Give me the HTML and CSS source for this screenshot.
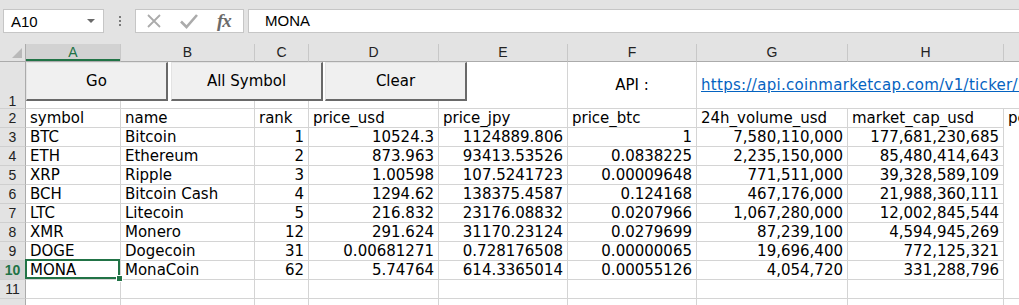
FILE: index.html
```html
<!DOCTYPE html>
<html>
<head>
    <link rel="stylesheet" href="styles.css">
</head>
<body>
<div class="app">
    <!-- formula bar -->
    <div class="formula-bar">
        <div class="name-box">
            <span>A10</span>
            <span class="caret"></span>
        </div>
        <div class="grip"><i></i><i></i><i></i></div>
        <div class="fx-box">
            <svg class="ico" width="18" height="18" viewBox="0 0 18 18">
                <path d="M3 3 L15 15 M15 3 L3 15" stroke="#ababab" stroke-width="1.8" fill="none"/>
            </svg>
            <svg class="ico" width="20" height="18" viewBox="0 0 20 18">
                <path d="M2 9.5 L7.5 15 L18 3" stroke="#ababab" stroke-width="2.6" fill="none"/>
            </svg>
            <span class="fx">fx</span>
        </div>
        <div class="formula-input">MONA</div>
    </div>

    <!-- sheet -->
    <div class="sheet">
        <div class="row head">
            <div class="corner"><span class="tri"></span></div>
            <div class="ch active">A</div>
            <div class="ch">B</div>
            <div class="ch">C</div>
            <div class="ch">D</div>
            <div class="ch">E</div>
            <div class="ch">F</div>
            <div class="ch">G</div>
            <div class="ch">H</div>
            <div class="ch"></div>
        </div>

        <div class="row tall">
            <div class="rh bottom">1</div>
            <div class="c"></div>
            <div class="c"></div>
            <div class="c"></div>
            <div class="c"></div>
            <div class="c"></div>
            <div class="c mid center">API :</div>
            <div class="c mid link-cell"><a href="#">https://api.coinmarketcap.com/v1/ticker/?convert=JPY</a></div>
        </div>

        <div class="row">
            <div class="rh">2</div>
            <div class="c">symbol</div>
            <div class="c">name</div>
            <div class="c">rank</div>
            <div class="c">price_usd</div>
            <div class="c">price_jpy</div>
            <div class="c">price_btc</div>
            <div class="c">24h_volume_usd</div>
            <div class="c">market_cap_usd</div>
            <div class="c open">percent_change_24h</div>
        </div>
        <div class="row">
            <div class="rh">3</div>
            <div class="c">BTC</div>
            <div class="c">Bitcoin</div>
            <div class="c num">1</div>
            <div class="c num">10524.3</div>
            <div class="c num">1124889.806</div>
            <div class="c num">1</div>
            <div class="c num">7,580,110,000</div>
            <div class="c num">177,681,230,685</div>
            <div class="c open"></div>
        </div>
        <div class="row">
            <div class="rh">4</div>
            <div class="c">ETH</div>
            <div class="c">Ethereum</div>
            <div class="c num">2</div>
            <div class="c num">873.963</div>
            <div class="c num">93413.53526</div>
            <div class="c num">0.0838225</div>
            <div class="c num">2,235,150,000</div>
            <div class="c num">85,480,414,643</div>
            <div class="c open"></div>
        </div>
        <div class="row">
            <div class="rh">5</div>
            <div class="c">XRP</div>
            <div class="c">Ripple</div>
            <div class="c num">3</div>
            <div class="c num">1.00598</div>
            <div class="c num">107.5241723</div>
            <div class="c num">0.00009648</div>
            <div class="c num">771,511,000</div>
            <div class="c num">39,328,589,109</div>
            <div class="c open"></div>
        </div>
        <div class="row">
            <div class="rh">6</div>
            <div class="c">BCH</div>
            <div class="c">Bitcoin Cash</div>
            <div class="c num">4</div>
            <div class="c num">1294.62</div>
            <div class="c num">138375.4587</div>
            <div class="c num">0.124168</div>
            <div class="c num">467,176,000</div>
            <div class="c num">21,988,360,111</div>
            <div class="c open"></div>
        </div>
        <div class="row">
            <div class="rh">7</div>
            <div class="c">LTC</div>
            <div class="c">Litecoin</div>
            <div class="c num">5</div>
            <div class="c num">216.832</div>
            <div class="c num">23176.08832</div>
            <div class="c num">0.0207966</div>
            <div class="c num">1,067,280,000</div>
            <div class="c num">12,002,845,544</div>
            <div class="c open"></div>
        </div>
        <div class="row">
            <div class="rh">8</div>
            <div class="c">XMR</div>
            <div class="c">Monero</div>
            <div class="c num">12</div>
            <div class="c num">291.624</div>
            <div class="c num">31170.23124</div>
            <div class="c num">0.0279699</div>
            <div class="c num">87,239,100</div>
            <div class="c num">4,594,945,269</div>
            <div class="c open"></div>
        </div>
        <div class="row">
            <div class="rh">9</div>
            <div class="c">DOGE</div>
            <div class="c">Dogecoin</div>
            <div class="c num">31</div>
            <div class="c num">0.00681271</div>
            <div class="c num">0.728176508</div>
            <div class="c num">0.00000065</div>
            <div class="c num">19,696,400</div>
            <div class="c num">772,125,321</div>
            <div class="c open"></div>
        </div>
        <div class="row">
            <div class="rh active">10</div>
            <div class="c selected">MONA<span class="handle"></span></div>
            <div class="c">MonaCoin</div>
            <div class="c num">62</div>
            <div class="c num">5.74764</div>
            <div class="c num">614.3365014</div>
            <div class="c num">0.00055126</div>
            <div class="c num">4,054,720</div>
            <div class="c num">331,288,796</div>
            <div class="c open"></div>
        </div>
        <div class="row">
            <div class="rh">11</div>
            <div class="c"></div><div class="c"></div><div class="c"></div>
            <div class="c"></div><div class="c"></div><div class="c"></div>
            <div class="c"></div><div class="c"></div><div class="c"></div>
        </div>
        <div class="row">
            <div class="rh"></div>
            <div class="c"></div><div class="c"></div><div class="c"></div>
            <div class="c"></div><div class="c"></div><div class="c"></div>
            <div class="c"></div><div class="c"></div><div class="c"></div>
        </div>

        <!-- form buttons floating over row 1 -->
        <div class="buttons">
            <button type="button" class="btn go">Go</button>
            <button type="button" class="btn all">All Symbol</button>
            <button type="button" class="btn clear">Clear</button>
        </div>
    </div>
</div>
</body>
</html>
```

FILE: styles.css
```css
/* Excel-like sheet */
body {
    margin: 0;
    overflow: hidden;
    background: #fff;
    font-family: "DejaVu Sans", sans-serif;
}

.app {
    width: 1019px;
    height: 305px;
    overflow: hidden;
}

/* ---- formula bar ---- */
.formula-bar {
    height: 44px;
    box-sizing: border-box;
    padding: 9px 0 0 3px;
    background: #e3e3e3;
    display: flex;
    align-items: flex-start;
    font-family: "Liberation Sans", Arial, sans-serif;
    font-size: 15px;
}

.name-box {
    width: 101px;
    height: 24px;
    box-sizing: border-box;
    border: 1px solid #c6c6c6;
    background: #fff;
    display: flex;
    align-items: center;
    justify-content: space-between;
    padding: 0 8px 0 7px;
}

.caret {
    width: 0;
    height: 0;
    border-left: 4px solid transparent;
    border-right: 4px solid transparent;
    border-top: 4px solid #6a6a6a;
}

.grip {
    width: 31px;
    height: 24px;
    display: flex;
    flex-direction: column;
    align-items: center;
    justify-content: center;
    gap: 2px;
}

.grip i {
    width: 2px;
    height: 2px;
    background: #7a7a7a;
}

.fx-box {
    width: 109px;
    height: 24px;
    box-sizing: border-box;
    border: 1px solid #c6c6c6;
    background: #fff;
    display: flex;
    align-items: center;
    padding-left: 9px;
}

.ico {
    display: block;
}

.ico + .ico {
    margin-left: 16px;
}

.fx {
    margin-left: 18px;
    font-family: "Liberation Serif", serif;
    font-style: italic;
    font-size: 19px;
    font-weight: bold;
    color: #6b6b6b;
    letter-spacing: -1px;
}

.formula-input {
    flex: 1;
    margin-left: 4px;
    height: 24px;
    box-sizing: border-box;
    border: 1px solid #c6c6c6;
    border-right: none;
    background: #fff;
    line-height: 22px;
    padding-left: 16px;
}

/* ---- sheet grid ---- */
.sheet {
    position: relative;
    width: 1084px;
    background: #fff;
}

.row {
    display: grid;
    grid-template-columns: 26px 95px 134px 54px 130px 129px 129px 151px 156px 80px;
    height: 19px;
}

.row.head {
    height: 18px;
    background: #e3e3e3;
}

.row.tall {
    height: 47px;
}

.corner {
    border-right: 1px solid #ababab;
    border-bottom: 1px solid #ababab;
    position: relative;
}

.tri {
    position: absolute;
    right: 3px;
    bottom: 3px;
    width: 0;
    height: 0;
    border-left: 10px solid transparent;
    border-bottom: 10px solid #b9b9b9;
}

.ch {
    border-right: 1px solid #c8c8c8;
    border-bottom: 1px solid #ababab;
    text-align: center;
    font-family: "Liberation Sans", Arial, sans-serif;
    font-size: 14px;
    line-height: 17px;
    color: #222;
}

.ch.active {
    background: #d2d2d2;
    color: #217346;
    box-shadow: inset 0 -2px 0 #217346;
}

.rh {
    background: #e3e3e3;
    border-right: 1px solid #ababab;
    border-bottom: 1px solid #cfcfcf;
    text-align: center;
    font-family: "Liberation Sans", Arial, sans-serif;
    font-size: 14px;
    line-height: 18px;
    color: #222;
}

.rh.bottom {
    display: flex;
    align-items: flex-end;
    justify-content: center;
    line-height: 14px;
}

.rh.active {
    background: #d2d2d2;
    color: #217346;
    font-weight: bold;
}

.c {
    border-right: 1px solid #d4d4d4;
    border-bottom: 1px solid #d4d4d4;
    padding: 0 4px;
    font-size: 15px;
    line-height: 18px;
    color: #000;
    white-space: nowrap;
    overflow: hidden;
}

.c.num {
    text-align: right;
}

.c.mid {
    line-height: 46px;
}

.c.center {
    text-align: center;
}

.c.open {
    border-right: none;
    border-bottom: none;
}

.link-cell {
    grid-column: span 3;
    border-right: none;
}

.link-cell a {
    color: #0563c1;
    text-decoration: underline;
    letter-spacing: 0.3px;
}

.c.selected {
    position: relative;
    overflow: visible;
}

.c.selected::after {
    content: "";
    position: absolute;
    left: -1px;
    top: -2px;
    right: 0;
    bottom: 0;
    border: 2px solid #217346;
}

.handle {
    position: absolute;
    right: -3px;
    bottom: -3px;
    width: 5px;
    height: 5px;
    background: #217346;
    border: 1px solid #fff;
    z-index: 2;
}

/* ---- form buttons ---- */
.buttons {
    position: absolute;
    left: 26px;
    top: 18px;
    display: flex;
}

.btn {
    height: 39px;
    box-sizing: border-box;
    background: #f0f0f0;
    border-top: 1px solid #e3e3e3;
    border-left: 1px solid #e3e3e3;
    border-right: 2px solid #696969;
    border-bottom: 2px solid #696969;
    font-family: "DejaVu Sans", sans-serif;
    font-size: 15px;
    color: #000;
    padding: 0 0 1px;
}

.btn.go {
    width: 142px;
}

.btn.all {
    width: 152px;
    margin-left: 3px;
}

.btn.clear {
    width: 142px;
    margin-left: 2px;
}
```
